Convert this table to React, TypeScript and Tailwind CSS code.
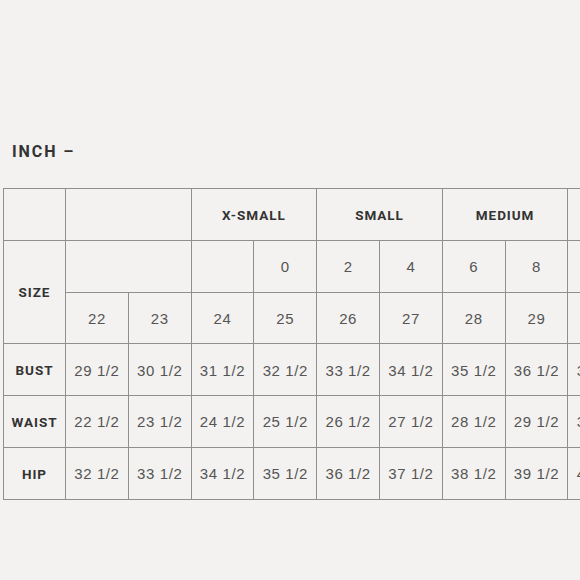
import React from "react";

const groups = ["X-SMALL", "SMALL", "MEDIUM", "LARGE"];
const subSizes = ["", "0", "2", "4", "6", "8", "10", "12"];
const waistSizes = [22, 23, 24, 25, 26, 27, 28, 29, 30, 31];

const measurements = [
  { label: "BUST", start: 29 },
  { label: "WAIST", start: 22 },
  { label: "HIP", start: 32 },
];

const cell = "border border-[#8f8f8f] h-[51.8px] p-0 text-center align-middle";
const labelText =
  "pt-[1px] font-['Roboto',sans-serif] text-[13.5px] font-bold tracking-[0.07em] text-[#333333]";
const numText = "pt-[2px] text-[15px] tracking-[0.04em] text-[#555555]";

export default function App() {
  return (
    <div
      className="w-[580px] h-[580px] overflow-hidden bg-[#f3f2f0]"
      style={{ fontFamily: '"Liberation Sans", Arial, sans-serif' }}
    >
      {/* Title */}
      <div className="pt-[144px] pl-[12px] font-['Roboto',sans-serif] text-[16px] leading-4 font-bold tracking-[0.12em] text-[#333333]">
        INCH –
      </div>

      {/* Size chart */}
      <table className="mt-[28px] ml-[3px] w-[690px] table-fixed border-collapse">
        <colgroup>
          <col className="w-[62px]" />
          {Array.from({ length: 10 }).map((_, i) => (
            <col key={i} className="w-[62.8px]" />
          ))}
        </colgroup>
        <tbody>
          <tr>
            <td className={cell}></td>
            <td className={cell} colSpan={2}></td>
            {groups.map((g) => (
              <td key={g} className={`${cell} ${labelText}`} colSpan={2}>
                {g}
              </td>
            ))}
          </tr>
          <tr>
            <td className={`${cell} ${labelText}`} rowSpan={2}>
              SIZE
            </td>
            <td className={cell} colSpan={2}></td>
            {subSizes.map((s, i) => (
              <td key={i} className={`${cell} ${numText}`}>
                {s}
              </td>
            ))}
          </tr>
          <tr>
            {waistSizes.map((n) => (
              <td key={n} className={`${cell} ${numText}`}>
                {n}
              </td>
            ))}
          </tr>
          {measurements.map((m) => (
            <tr key={m.label}>
              <td className={`${cell} ${labelText}`}>{m.label}</td>
              {Array.from({ length: 10 }).map((_, i) => (
                <td key={i} className={`${cell} ${numText}`}>
                  {m.start + i} 1/2
                </td>
              ))}
            </tr>
          ))}
        </tbody>
      </table>
    </div>
  );
}
